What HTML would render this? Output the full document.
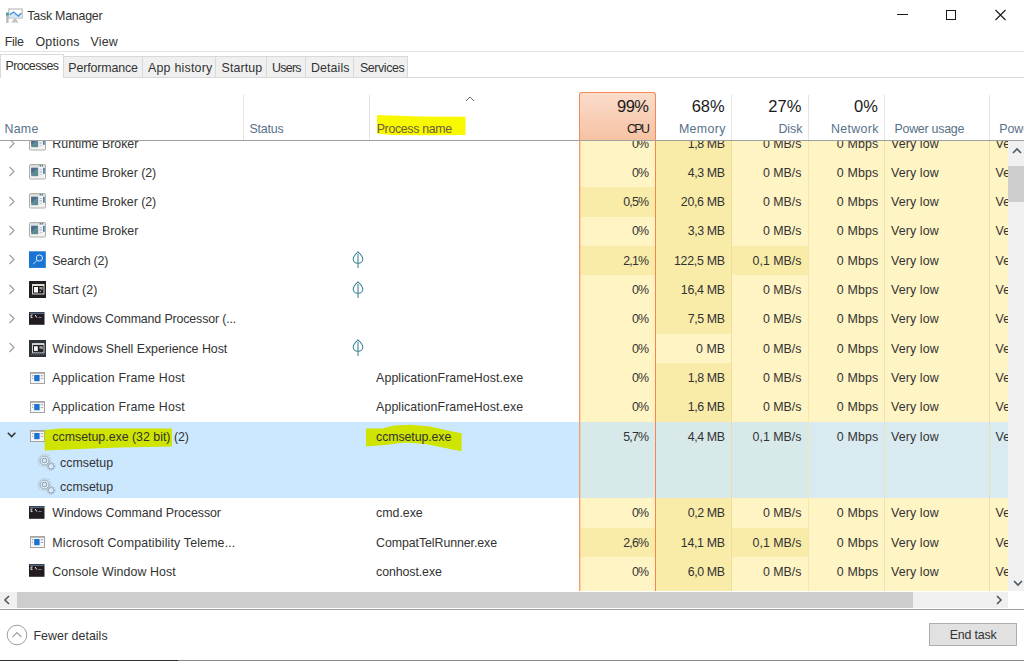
<!DOCTYPE html>
<html><head><meta charset="utf-8"><title>Task Manager</title>
<style>
html,body{margin:0;padding:0;background:#fff;width:1024px;height:661px;overflow:hidden;position:relative;}
.t{position:absolute;white-space:nowrap;line-height:20px;font-family:"Liberation Sans",sans-serif;}
.r{position:absolute;}
.clip{position:absolute;overflow:hidden;}
</style></head><body>
<div class="t" style="left:27.3px;top:6.10px;font-size:12.4px;color:#333;letter-spacing:-0.230px;">Task Manager</div>
<div class="r" style="left:897px;top:14px;width:11px;height:1px;background:#1a1a1a;"></div>
<div class="r" style="left:946px;top:10px;width:10px;height:10px;background:transparent;border:1px solid #1a1a1a;box-sizing:border-box;"></div>
<svg class="r" style="left:994px;top:9px" width="13" height="12" viewBox="0 0 13 12"><path d="M1.5 1 L11.5 11 M11.5 1 L1.5 11" stroke="#1a1a1a" stroke-width="1.1" fill="none"/></svg>
<svg class="r" style="left:0;top:0" width="30" height="30" viewBox="0 0 30 30">
<rect x="8.8" y="9" width="13.4" height="9" fill="#ffffff" stroke="#bdbdbd" stroke-width="1.2"/>
<path d="M9.6 14.6 L13.6 12 L18.4 16 L21.4 13 L21.4 17.8 L9.6 17.8Z" fill="#cfe6f7"/>
<path d="M9.6 14.6 L13.6 12 L18.4 16 L21.4 13" stroke="#4b92d4" stroke-width="1.3" fill="none"/>
<path d="M14.2 18.5 L15.8 18.5 L18.6 22.4 L11.2 22.4Z" fill="#c4c4c4"/>
<rect x="6.2" y="12.7" width="2.4" height="10.2" fill="#b9b9b9"/>
<rect x="6.2" y="12.7" width="2.4" height="2.8" fill="#4a9a86"/>
</svg>
<div class="t" style="left:4.8px;top:31.60px;font-size:12.4px;color:#333;letter-spacing:-0.290px;">File</div>
<div class="t" style="left:35.5px;top:31.60px;font-size:12.4px;color:#333;letter-spacing:0.216px;">Options</div>
<div class="t" style="left:90.4px;top:31.60px;font-size:12.4px;color:#333;letter-spacing:0.253px;">View</div>
<div class="r" style="left:0px;top:51px;width:1024px;height:1px;background:#e3e3e3;"></div>
<div class="r" style="left:0px;top:77px;width:1024px;height:1px;background:#dadada;"></div>
<div class="r" style="left:0px;top:54px;width:64px;height:24px;background:#ffffff;border:1px solid #d9d9d9;border-bottom:none;box-sizing:border-box;"></div>
<div class="t" style="left:5.5px;top:56.20px;font-size:12.4px;color:#333;letter-spacing:-0.545px;">Processes</div>
<div class="r" style="left:64px;top:56px;width:78.5px;height:22px;background:#f0f0f0;border:1px solid #d9d9d9;border-left:none;box-sizing:border-box;"></div>
<div class="t" style="left:68.3px;top:58.00px;font-size:12.4px;color:#333;letter-spacing:-0.124px;">Performance</div>
<div class="r" style="left:142.5px;top:56px;width:73.5px;height:22px;background:#f0f0f0;border:1px solid #d9d9d9;border-left:none;box-sizing:border-box;"></div>
<div class="t" style="left:148px;top:58.00px;font-size:12.4px;color:#333;letter-spacing:0.222px;">App history</div>
<div class="r" style="left:216px;top:56px;width:50.5px;height:22px;background:#f0f0f0;border:1px solid #d9d9d9;border-left:none;box-sizing:border-box;"></div>
<div class="t" style="left:221.5px;top:58.00px;font-size:12.4px;color:#333;letter-spacing:0.124px;">Startup</div>
<div class="r" style="left:266.5px;top:56px;width:39.5px;height:22px;background:#f0f0f0;border:1px solid #d9d9d9;border-left:none;box-sizing:border-box;"></div>
<div class="t" style="left:272px;top:58.00px;font-size:12.4px;color:#333;letter-spacing:-0.715px;">Users</div>
<div class="r" style="left:306px;top:56px;width:48px;height:22px;background:#f0f0f0;border:1px solid #d9d9d9;border-left:none;box-sizing:border-box;"></div>
<div class="t" style="left:310.9px;top:58.00px;font-size:12.4px;color:#333;letter-spacing:0.121px;">Details</div>
<div class="r" style="left:354px;top:56px;width:54px;height:22px;background:#f0f0f0;border:1px solid #d9d9d9;border-left:none;box-sizing:border-box;"></div>
<div class="t" style="left:360px;top:58.00px;font-size:12.4px;color:#333;letter-spacing:-0.402px;">Services</div>
<div class="r" style="left:243px;top:95px;width:1px;height:45px;background:#e3e3e3;"></div>
<div class="r" style="left:369px;top:95px;width:1px;height:45px;background:#e3e3e3;"></div>
<div class="r" style="left:731px;top:95px;width:1px;height:45px;background:#e3e3e3;"></div>
<div class="r" style="left:808px;top:95px;width:1px;height:45px;background:#e3e3e3;"></div>
<div class="r" style="left:884px;top:95px;width:1px;height:45px;background:#e3e3e3;"></div>
<div class="r" style="left:989px;top:95px;width:1px;height:45px;background:#e3e3e3;"></div>
<div class="r" style="left:0px;top:140px;width:1024px;height:1px;background:#a0a0a0;"></div>
<div class="t" style="left:4.6px;top:118.90px;font-size:12.4px;color:#587288;letter-spacing:0.213px;">Name</div>
<div class="t" style="left:249.4px;top:118.90px;font-size:12.4px;color:#587288;letter-spacing:-0.188px;">Status</div>
<svg class="r" style="left:0;top:0" width="1024" height="661"><polygon points="377,115 392,115.5 420,116.5 465.5,116.7 465.5,134.9 420,135.2 392,135 377,133.5" fill="#f8f800"/></svg>
<div class="t" style="left:376.7px;top:118.90px;font-size:12.4px;color:#6a5f40;letter-spacing:-0.337px;">Process name</div>
<svg class="r" style="left:465px;top:95px" width="10" height="7" viewBox="0 0 10 7"><path d="M1 6 L5 2 L9 6" stroke="#6d6d6d" stroke-width="1" fill="none"/></svg>
<div class="r" style="left:579px;top:92px;width:77px;height:48px;background:linear-gradient(#fadccb,#f7c2a3);border:1px solid #f4885a;border-bottom:none;border-radius:3px 3px 0 0;box-sizing:border-box;"></div>
<div class="t" style="right:375.5px;top:96.28px;font-size:16.5px;color:#1a1a1a;letter-spacing:-0.516px;">99%</div>
<div class="t" style="right:375.70000000000005px;top:118.90px;font-size:12.4px;color:#1a1a1a;letter-spacing:-1.586px;">CPU</div>
<div class="t" style="right:299.29999999999995px;top:96.28px;font-size:16.5px;color:#1a1a1a;">68%</div>
<div class="t" style="right:298.29999999999995px;top:118.90px;font-size:12.4px;color:#587288;letter-spacing:0.330px;">Memory</div>
<div class="t" style="right:222.70000000000005px;top:96.28px;font-size:16.5px;color:#1a1a1a;">27%</div>
<div class="t" style="right:221.70000000000005px;top:118.90px;font-size:12.4px;color:#587288;letter-spacing:-0.065px;">Disk</div>
<div class="t" style="right:146.20000000000005px;top:96.28px;font-size:16.5px;color:#1a1a1a;">0%</div>
<div class="t" style="right:145.20000000000005px;top:118.90px;font-size:12.4px;color:#587288;letter-spacing:0.324px;">Network</div>
<div class="t" style="left:894.5px;top:118.90px;font-size:12.4px;color:#587288;letter-spacing:-0.243px;">Power usage</div>
<div class="t" style="left:999.2px;top:118.90px;font-size:12.4px;color:#587288;">Power usage trend</div>
<div class="clip" style="left:0;top:141px;width:1008px;height:450px;"><div style="position:absolute;left:0;top:-141px;width:1024px;height:661px;">
<div class="r" style="left:580px;top:129px;width:75px;height:29px;background:#fff4c4;"></div>
<div class="r" style="left:656px;top:129px;width:75px;height:29px;background:#f9eca8;"></div>
<div class="r" style="left:731px;top:129px;width:77px;height:29px;background:#fff4c4;"></div>
<div class="r" style="left:808px;top:129px;width:76px;height:29px;background:#fff4c4;"></div>
<div class="r" style="left:884px;top:129px;width:105px;height:29px;background:#fff4c4;"></div>
<div class="r" style="left:989px;top:129px;width:19px;height:29px;background:#fff4c4;"></div>
<div class="r" style="left:580px;top:158px;width:75px;height:29px;background:#fff4c4;"></div>
<div class="r" style="left:656px;top:158px;width:75px;height:29px;background:#f9eca8;"></div>
<div class="r" style="left:731px;top:158px;width:77px;height:29px;background:#fff4c4;"></div>
<div class="r" style="left:808px;top:158px;width:76px;height:29px;background:#fff4c4;"></div>
<div class="r" style="left:884px;top:158px;width:105px;height:29px;background:#fff4c4;"></div>
<div class="r" style="left:989px;top:158px;width:19px;height:29px;background:#fff4c4;"></div>
<div class="r" style="left:580px;top:187px;width:75px;height:30px;background:#f9eca8;"></div>
<div class="r" style="left:656px;top:187px;width:75px;height:30px;background:#f9eca8;"></div>
<div class="r" style="left:731px;top:187px;width:77px;height:30px;background:#fff4c4;"></div>
<div class="r" style="left:808px;top:187px;width:76px;height:30px;background:#fff4c4;"></div>
<div class="r" style="left:884px;top:187px;width:105px;height:30px;background:#fff4c4;"></div>
<div class="r" style="left:989px;top:187px;width:19px;height:30px;background:#fff4c4;"></div>
<div class="r" style="left:580px;top:217px;width:75px;height:29px;background:#fff4c4;"></div>
<div class="r" style="left:656px;top:217px;width:75px;height:29px;background:#f9eca8;"></div>
<div class="r" style="left:731px;top:217px;width:77px;height:29px;background:#fff4c4;"></div>
<div class="r" style="left:808px;top:217px;width:76px;height:29px;background:#fff4c4;"></div>
<div class="r" style="left:884px;top:217px;width:105px;height:29px;background:#fff4c4;"></div>
<div class="r" style="left:989px;top:217px;width:19px;height:29px;background:#fff4c4;"></div>
<div class="r" style="left:580px;top:246px;width:75px;height:29px;background:#f9eca8;"></div>
<div class="r" style="left:656px;top:246px;width:75px;height:29px;background:#f9eca8;"></div>
<div class="r" style="left:731px;top:246px;width:77px;height:29px;background:#f9eca8;"></div>
<div class="r" style="left:808px;top:246px;width:76px;height:29px;background:#fff4c4;"></div>
<div class="r" style="left:884px;top:246px;width:105px;height:29px;background:#fff4c4;"></div>
<div class="r" style="left:989px;top:246px;width:19px;height:29px;background:#fff4c4;"></div>
<div class="r" style="left:580px;top:275px;width:75px;height:30px;background:#fff4c4;"></div>
<div class="r" style="left:656px;top:275px;width:75px;height:30px;background:#f9eca8;"></div>
<div class="r" style="left:731px;top:275px;width:77px;height:30px;background:#fff4c4;"></div>
<div class="r" style="left:808px;top:275px;width:76px;height:30px;background:#fff4c4;"></div>
<div class="r" style="left:884px;top:275px;width:105px;height:30px;background:#fff4c4;"></div>
<div class="r" style="left:989px;top:275px;width:19px;height:30px;background:#fff4c4;"></div>
<div class="r" style="left:580px;top:305px;width:75px;height:29px;background:#fff4c4;"></div>
<div class="r" style="left:656px;top:305px;width:75px;height:29px;background:#f9eca8;"></div>
<div class="r" style="left:731px;top:305px;width:77px;height:29px;background:#fff4c4;"></div>
<div class="r" style="left:808px;top:305px;width:76px;height:29px;background:#fff4c4;"></div>
<div class="r" style="left:884px;top:305px;width:105px;height:29px;background:#fff4c4;"></div>
<div class="r" style="left:989px;top:305px;width:19px;height:29px;background:#fff4c4;"></div>
<div class="r" style="left:580px;top:334px;width:75px;height:29px;background:#fff4c4;"></div>
<div class="r" style="left:656px;top:334px;width:75px;height:29px;background:#fff4c4;"></div>
<div class="r" style="left:731px;top:334px;width:77px;height:29px;background:#fff4c4;"></div>
<div class="r" style="left:808px;top:334px;width:76px;height:29px;background:#fff4c4;"></div>
<div class="r" style="left:884px;top:334px;width:105px;height:29px;background:#fff4c4;"></div>
<div class="r" style="left:989px;top:334px;width:19px;height:29px;background:#fff4c4;"></div>
<div class="r" style="left:580px;top:363px;width:75px;height:30px;background:#fff4c4;"></div>
<div class="r" style="left:656px;top:363px;width:75px;height:30px;background:#f9eca8;"></div>
<div class="r" style="left:731px;top:363px;width:77px;height:30px;background:#fff4c4;"></div>
<div class="r" style="left:808px;top:363px;width:76px;height:30px;background:#fff4c4;"></div>
<div class="r" style="left:884px;top:363px;width:105px;height:30px;background:#fff4c4;"></div>
<div class="r" style="left:989px;top:363px;width:19px;height:30px;background:#fff4c4;"></div>
<div class="r" style="left:580px;top:393px;width:75px;height:29px;background:#fff4c4;"></div>
<div class="r" style="left:656px;top:393px;width:75px;height:29px;background:#f9eca8;"></div>
<div class="r" style="left:731px;top:393px;width:77px;height:29px;background:#fff4c4;"></div>
<div class="r" style="left:808px;top:393px;width:76px;height:29px;background:#fff4c4;"></div>
<div class="r" style="left:884px;top:393px;width:105px;height:29px;background:#fff4c4;"></div>
<div class="r" style="left:989px;top:393px;width:19px;height:29px;background:#fff4c4;"></div>
<div class="r" style="left:580px;top:498px;width:75px;height:30px;background:#fff4c4;"></div>
<div class="r" style="left:656px;top:498px;width:75px;height:30px;background:#f9eca8;"></div>
<div class="r" style="left:731px;top:498px;width:77px;height:30px;background:#fff4c4;"></div>
<div class="r" style="left:808px;top:498px;width:76px;height:30px;background:#fff4c4;"></div>
<div class="r" style="left:884px;top:498px;width:105px;height:30px;background:#fff4c4;"></div>
<div class="r" style="left:989px;top:498px;width:19px;height:30px;background:#fff4c4;"></div>
<div class="r" style="left:580px;top:528px;width:75px;height:29px;background:#f9eca8;"></div>
<div class="r" style="left:656px;top:528px;width:75px;height:29px;background:#f9eca8;"></div>
<div class="r" style="left:731px;top:528px;width:77px;height:29px;background:#f9eca8;"></div>
<div class="r" style="left:808px;top:528px;width:76px;height:29px;background:#fff4c4;"></div>
<div class="r" style="left:884px;top:528px;width:105px;height:29px;background:#fff4c4;"></div>
<div class="r" style="left:989px;top:528px;width:19px;height:29px;background:#fff4c4;"></div>
<div class="r" style="left:580px;top:557px;width:75px;height:34px;background:#fff4c4;"></div>
<div class="r" style="left:656px;top:557px;width:75px;height:34px;background:#f9eca8;"></div>
<div class="r" style="left:731px;top:557px;width:77px;height:34px;background:#fff4c4;"></div>
<div class="r" style="left:808px;top:557px;width:76px;height:34px;background:#fff4c4;"></div>
<div class="r" style="left:884px;top:557px;width:105px;height:34px;background:#fff4c4;"></div>
<div class="r" style="left:989px;top:557px;width:19px;height:34px;background:#fff4c4;"></div>
<div class="r" style="left:0px;top:422px;width:579px;height:76px;background:#cce8ff;"></div>
<div class="r" style="left:580px;top:422px;width:75px;height:76px;background:#f9eca8;"></div>
<div class="r" style="left:656px;top:422px;width:75px;height:76px;background:#f9eca8;"></div>
<div class="r" style="left:731px;top:422px;width:77px;height:76px;background:#f9eca8;"></div>
<div class="r" style="left:808px;top:422px;width:76px;height:76px;background:#fff4c4;"></div>
<div class="r" style="left:884px;top:422px;width:105px;height:76px;background:#fff4c4;"></div>
<div class="r" style="left:989px;top:422px;width:19px;height:76px;background:#fff4c4;"></div>
<div class="r" style="left:580px;top:422px;width:428px;height:76px;background:rgba(204,232,255,0.75);"></div>
<div class="r" style="left:731px;top:141px;width:1px;height:450px;background:#eedfa0;"></div>
<div class="r" style="left:808px;top:141px;width:1px;height:450px;background:#f3e6b0;"></div>
<div class="r" style="left:884px;top:141px;width:1px;height:450px;background:#e9e3b8;"></div>
<div class="r" style="left:989px;top:141px;width:1px;height:450px;background:#efdcae;"></div>
<div class="r" style="left:579px;top:141px;width:1px;height:450px;background:#f29f6c;"></div>
<div class="r" style="left:580px;top:141px;width:1px;height:450px;background:rgba(246,170,130,0.45);"></div>
<div class="r" style="left:655px;top:141px;width:1px;height:450px;background:#fa8446;"></div>
<svg class="r" style="left:8px;top:137.50px" width="8" height="11" viewBox="0 0 8 11"><path d="M1.5 1 L6 5.5 L1.5 10" stroke="#9c9c9c" stroke-width="1.1" fill="none"/></svg>
<svg class="r" style="left:29px;top:135px" width="18" height="16" viewBox="0 0 18 16"><rect x="0.5" y="0.5" width="16" height="14.5" rx="1" fill="#f3f3f3" stroke="#b3aea4"/><rect x="1" y="1" width="15" height="1.6" fill="#d8d8d8"/><rect x="10.6" y="1.1" width="1.4" height="1.4" fill="#3b8494"/><rect x="12.6" y="1.1" width="1.4" height="1.4" fill="#3b8494"/><rect x="2.2" y="3.8" width="7" height="8.4" fill="#5d8b93"/><path d="M2.2 3.8 H9.2 L2.2 10Z" fill="#4d6c8e"/><rect x="14" y="3.8" width="1.8" height="6" fill="#4a86b8"/><rect x="10.5" y="5" width="2.6" height="0.9" fill="#c0c0c0"/><rect x="10.5" y="7.5" width="2.6" height="0.9" fill="#a0a0a0"/><rect x="10.5" y="10" width="2.6" height="0.9" fill="#c8c8c8"/></svg>
<div class="t" style="left:52.3px;top:133.70px;font-size:12.4px;color:#333;">Runtime Broker</div>
<div class="t" style="right:376.0px;top:133.70px;font-size:12.4px;color:#333;letter-spacing:-1.000px;">0%</div>
<div class="t" style="right:299.4px;top:133.70px;font-size:12.4px;color:#333;letter-spacing:-0.400px;">1,8 MB</div>
<div class="t" style="right:222.5px;top:133.70px;font-size:12.4px;color:#333;">0 MB/s</div>
<div class="t" style="right:145.5px;top:133.70px;font-size:12.4px;color:#333;letter-spacing:0.200px;">0 Mbps</div>
<div class="t" style="left:891px;top:133.70px;font-size:12.4px;color:#333;letter-spacing:0.125px;">Very low</div>
<div class="t" style="left:995.6px;top:133.70px;font-size:12.4px;color:#333;letter-spacing:0.125px;">Very low</div>
<svg class="r" style="left:8px;top:166.33px" width="8" height="11" viewBox="0 0 8 11"><path d="M1.5 1 L6 5.5 L1.5 10" stroke="#9c9c9c" stroke-width="1.1" fill="none"/></svg>
<svg class="r" style="left:29px;top:164px" width="18" height="16" viewBox="0 0 18 16"><rect x="0.5" y="0.5" width="16" height="14.5" rx="1" fill="#f3f3f3" stroke="#b3aea4"/><rect x="1" y="1" width="15" height="1.6" fill="#d8d8d8"/><rect x="10.6" y="1.1" width="1.4" height="1.4" fill="#3b8494"/><rect x="12.6" y="1.1" width="1.4" height="1.4" fill="#3b8494"/><rect x="2.2" y="3.8" width="7" height="8.4" fill="#5d8b93"/><path d="M2.2 3.8 H9.2 L2.2 10Z" fill="#4d6c8e"/><rect x="14" y="3.8" width="1.8" height="6" fill="#4a86b8"/><rect x="10.5" y="5" width="2.6" height="0.9" fill="#c0c0c0"/><rect x="10.5" y="7.5" width="2.6" height="0.9" fill="#a0a0a0"/><rect x="10.5" y="10" width="2.6" height="0.9" fill="#c8c8c8"/></svg>
<div class="t" style="left:52.3px;top:162.53px;font-size:12.4px;color:#333;letter-spacing:-0.045px;">Runtime Broker (2)</div>
<div class="t" style="right:376.0px;top:162.53px;font-size:12.4px;color:#333;letter-spacing:-1.000px;">0%</div>
<div class="t" style="right:299.4px;top:162.53px;font-size:12.4px;color:#333;letter-spacing:-0.400px;">4,3 MB</div>
<div class="t" style="right:222.5px;top:162.53px;font-size:12.4px;color:#333;">0 MB/s</div>
<div class="t" style="right:145.5px;top:162.53px;font-size:12.4px;color:#333;letter-spacing:0.200px;">0 Mbps</div>
<div class="t" style="left:891px;top:162.53px;font-size:12.4px;color:#333;letter-spacing:0.125px;">Very low</div>
<div class="t" style="left:995.6px;top:162.53px;font-size:12.4px;color:#333;letter-spacing:0.125px;">Very low</div>
<svg class="r" style="left:8px;top:195.66px" width="8" height="11" viewBox="0 0 8 11"><path d="M1.5 1 L6 5.5 L1.5 10" stroke="#9c9c9c" stroke-width="1.1" fill="none"/></svg>
<svg class="r" style="left:29px;top:193px" width="18" height="16" viewBox="0 0 18 16"><rect x="0.5" y="0.5" width="16" height="14.5" rx="1" fill="#f3f3f3" stroke="#b3aea4"/><rect x="1" y="1" width="15" height="1.6" fill="#d8d8d8"/><rect x="10.6" y="1.1" width="1.4" height="1.4" fill="#3b8494"/><rect x="12.6" y="1.1" width="1.4" height="1.4" fill="#3b8494"/><rect x="2.2" y="3.8" width="7" height="8.4" fill="#5d8b93"/><path d="M2.2 3.8 H9.2 L2.2 10Z" fill="#4d6c8e"/><rect x="14" y="3.8" width="1.8" height="6" fill="#4a86b8"/><rect x="10.5" y="5" width="2.6" height="0.9" fill="#c0c0c0"/><rect x="10.5" y="7.5" width="2.6" height="0.9" fill="#a0a0a0"/><rect x="10.5" y="10" width="2.6" height="0.9" fill="#c8c8c8"/></svg>
<div class="t" style="left:52.3px;top:191.86px;font-size:12.4px;color:#333;letter-spacing:-0.045px;">Runtime Broker (2)</div>
<div class="t" style="right:375.83333333333337px;top:191.86px;font-size:12.4px;color:#333;letter-spacing:-0.833px;">0,5%</div>
<div class="t" style="right:299.33333333333337px;top:191.86px;font-size:12.4px;color:#333;letter-spacing:-0.333px;">20,6 MB</div>
<div class="t" style="right:222.5px;top:191.86px;font-size:12.4px;color:#333;">0 MB/s</div>
<div class="t" style="right:145.5px;top:191.86px;font-size:12.4px;color:#333;letter-spacing:0.200px;">0 Mbps</div>
<div class="t" style="left:891px;top:191.86px;font-size:12.4px;color:#333;letter-spacing:0.125px;">Very low</div>
<div class="t" style="left:995.6px;top:191.86px;font-size:12.4px;color:#333;letter-spacing:0.125px;">Very low</div>
<svg class="r" style="left:8px;top:224.99px" width="8" height="11" viewBox="0 0 8 11"><path d="M1.5 1 L6 5.5 L1.5 10" stroke="#9c9c9c" stroke-width="1.1" fill="none"/></svg>
<svg class="r" style="left:29px;top:222px" width="18" height="16" viewBox="0 0 18 16"><rect x="0.5" y="0.5" width="16" height="14.5" rx="1" fill="#f3f3f3" stroke="#b3aea4"/><rect x="1" y="1" width="15" height="1.6" fill="#d8d8d8"/><rect x="10.6" y="1.1" width="1.4" height="1.4" fill="#3b8494"/><rect x="12.6" y="1.1" width="1.4" height="1.4" fill="#3b8494"/><rect x="2.2" y="3.8" width="7" height="8.4" fill="#5d8b93"/><path d="M2.2 3.8 H9.2 L2.2 10Z" fill="#4d6c8e"/><rect x="14" y="3.8" width="1.8" height="6" fill="#4a86b8"/><rect x="10.5" y="5" width="2.6" height="0.9" fill="#c0c0c0"/><rect x="10.5" y="7.5" width="2.6" height="0.9" fill="#a0a0a0"/><rect x="10.5" y="10" width="2.6" height="0.9" fill="#c8c8c8"/></svg>
<div class="t" style="left:52.3px;top:221.19px;font-size:12.4px;color:#333;">Runtime Broker</div>
<div class="t" style="right:376.0px;top:221.19px;font-size:12.4px;color:#333;letter-spacing:-1.000px;">0%</div>
<div class="t" style="right:299.4px;top:221.19px;font-size:12.4px;color:#333;letter-spacing:-0.400px;">3,3 MB</div>
<div class="t" style="right:222.5px;top:221.19px;font-size:12.4px;color:#333;">0 MB/s</div>
<div class="t" style="right:145.5px;top:221.19px;font-size:12.4px;color:#333;letter-spacing:0.200px;">0 Mbps</div>
<div class="t" style="left:891px;top:221.19px;font-size:12.4px;color:#333;letter-spacing:0.125px;">Very low</div>
<div class="t" style="left:995.6px;top:221.19px;font-size:12.4px;color:#333;letter-spacing:0.125px;">Very low</div>
<svg class="r" style="left:8px;top:254.32px" width="8" height="11" viewBox="0 0 8 11"><path d="M1.5 1 L6 5.5 L1.5 10" stroke="#9c9c9c" stroke-width="1.1" fill="none"/></svg>
<svg class="r" style="left:29px;top:251px" width="17" height="17" viewBox="0 0 17 17"><rect x="0" y="0.3" width="16.8" height="16.6" fill="#1a74d2"/><circle cx="10.4" cy="7" r="3.1" stroke="#e4efff" stroke-width="0.95" fill="none"/><path d="M8.2 9.2 L4.2 13.2" stroke="#d8e8fa" stroke-width="0.95"/></svg>
<div class="t" style="left:52.3px;top:250.52px;font-size:12.4px;color:#333;letter-spacing:-0.207px;">Search (2)</div>
<svg class="r" style="left:351.5px;top:251.32px" width="12" height="18" viewBox="0 0 12 18"><path d="M6 0.8 C3 3.5 1 6 1.2 8.5 C1.5 11 4 12.2 6 12.2 C8 12.2 10.5 11 10.8 8.5 C11 6 9 3.5 6 0.8Z" fill="none" stroke="#3f8496" stroke-width="1.05"/><path d="M6 3 V17" stroke="#3f8496" stroke-width="1.1"/></svg>
<div class="t" style="right:375.83333333333337px;top:250.52px;font-size:12.4px;color:#333;letter-spacing:-0.833px;">2,1%</div>
<div class="t" style="right:299.28571428571433px;top:250.52px;font-size:12.4px;color:#333;letter-spacing:-0.286px;">122,5 MB</div>
<div class="t" style="right:222.5px;top:250.52px;font-size:12.4px;color:#333;">0,1 MB/s</div>
<div class="t" style="right:145.5px;top:250.52px;font-size:12.4px;color:#333;letter-spacing:0.200px;">0 Mbps</div>
<div class="t" style="left:891px;top:250.52px;font-size:12.4px;color:#333;letter-spacing:0.125px;">Very low</div>
<div class="t" style="left:995.6px;top:250.52px;font-size:12.4px;color:#333;letter-spacing:0.125px;">Very low</div>
<svg class="r" style="left:8px;top:283.65px" width="8" height="11" viewBox="0 0 8 11"><path d="M1.5 1 L6 5.5 L1.5 10" stroke="#9c9c9c" stroke-width="1.1" fill="none"/></svg>
<svg class="r" style="left:29px;top:281px" width="17" height="17" viewBox="0 0 17 17"><rect x="0" y="0" width="17" height="17" fill="#231e22"/><rect x="3.5" y="3.5" width="11.5" height="9.5" fill="#1a1a1e" stroke="#dcd8cc" stroke-width="1"/><rect x="3.5" y="3.2" width="11.5" height="1.8" fill="#e4e0d6"/><rect x="5" y="6" width="4" height="5.5" fill="#fbfbfb"/><rect x="10.6" y="6" width="1" height="2.2" fill="#e8e8e8"/><rect x="12.4" y="6" width="1" height="2.8" fill="#e8e8e8"/><rect x="10.6" y="9.8" width="1.2" height="1.2" fill="#dddddd"/></svg>
<div class="t" style="left:52.3px;top:279.85px;font-size:12.4px;color:#333;letter-spacing:0.029px;">Start (2)</div>
<svg class="r" style="left:351.5px;top:280.65px" width="12" height="18" viewBox="0 0 12 18"><path d="M6 0.8 C3 3.5 1 6 1.2 8.5 C1.5 11 4 12.2 6 12.2 C8 12.2 10.5 11 10.8 8.5 C11 6 9 3.5 6 0.8Z" fill="none" stroke="#3f8496" stroke-width="1.05"/><path d="M6 3 V17" stroke="#3f8496" stroke-width="1.1"/></svg>
<div class="t" style="right:376.0px;top:279.85px;font-size:12.4px;color:#333;letter-spacing:-1.000px;">0%</div>
<div class="t" style="right:299.33333333333337px;top:279.85px;font-size:12.4px;color:#333;letter-spacing:-0.333px;">16,4 MB</div>
<div class="t" style="right:222.5px;top:279.85px;font-size:12.4px;color:#333;">0 MB/s</div>
<div class="t" style="right:145.5px;top:279.85px;font-size:12.4px;color:#333;letter-spacing:0.200px;">0 Mbps</div>
<div class="t" style="left:891px;top:279.85px;font-size:12.4px;color:#333;letter-spacing:0.125px;">Very low</div>
<div class="t" style="left:995.6px;top:279.85px;font-size:12.4px;color:#333;letter-spacing:0.125px;">Very low</div>
<svg class="r" style="left:8px;top:312.98px" width="8" height="11" viewBox="0 0 8 11"><path d="M1.5 1 L6 5.5 L1.5 10" stroke="#9c9c9c" stroke-width="1.1" fill="none"/></svg>
<svg class="r" style="left:29px;top:312px" width="16" height="13" viewBox="0 0 16 13"><rect x="0" y="0" width="15.5" height="12.8" fill="#221c22"/><rect x="0.5" y="0.6" width="14.5" height="1.2" fill="#5f7e9c"/><path d="M3.6 3 H2 V5.6 H3.6" stroke="#e0e0e0" stroke-width="1" fill="none"/><path d="M6.2 3 L7.8 5.6" stroke="#e6e6e6" stroke-width="1"/><rect x="9.5" y="5" width="3" height="0.9" fill="#8a8a90"/></svg>
<div class="t" style="left:52.3px;top:309.18px;font-size:12.4px;color:#333;letter-spacing:-0.137px;">Windows Command Processor (...</div>
<div class="t" style="right:376.0px;top:309.18px;font-size:12.4px;color:#333;letter-spacing:-1.000px;">0%</div>
<div class="t" style="right:299.4px;top:309.18px;font-size:12.4px;color:#333;letter-spacing:-0.400px;">7,5 MB</div>
<div class="t" style="right:222.5px;top:309.18px;font-size:12.4px;color:#333;">0 MB/s</div>
<div class="t" style="right:145.5px;top:309.18px;font-size:12.4px;color:#333;letter-spacing:0.200px;">0 Mbps</div>
<div class="t" style="left:891px;top:309.18px;font-size:12.4px;color:#333;letter-spacing:0.125px;">Very low</div>
<div class="t" style="left:995.6px;top:309.18px;font-size:12.4px;color:#333;letter-spacing:0.125px;">Very low</div>
<svg class="r" style="left:8px;top:342.31px" width="8" height="11" viewBox="0 0 8 11"><path d="M1.5 1 L6 5.5 L1.5 10" stroke="#9c9c9c" stroke-width="1.1" fill="none"/></svg>
<svg class="r" style="left:29px;top:340px" width="17" height="17" viewBox="0 0 17 17"><rect x="0" y="0" width="17" height="17" fill="#2e3438"/><rect x="3.5" y="3.8" width="11.5" height="9" fill="#1e2226" stroke="#d4d4d4" stroke-width="1"/><rect x="3.5" y="3.3" width="11.5" height="1.6" fill="#dedede"/><rect x="5" y="6.3" width="3.8" height="4.6" fill="#fbfbfb"/><rect x="10.6" y="6.2" width="1.1" height="2.4" fill="#e0e0e0"/><rect x="12.4" y="6.2" width="1.1" height="3" fill="#e0e0e0"/><path d="M4 12.3 H14.5" stroke="#4a78a8" stroke-width="1" stroke-dasharray="1 1"/><path d="M2 14.6 H15" stroke="#6a625e" stroke-width="0.9" stroke-dasharray="1 1"/></svg>
<div class="t" style="left:52.3px;top:338.51px;font-size:12.4px;color:#333;letter-spacing:-0.022px;">Windows Shell Experience Host</div>
<svg class="r" style="left:351.5px;top:339.31px" width="12" height="18" viewBox="0 0 12 18"><path d="M6 0.8 C3 3.5 1 6 1.2 8.5 C1.5 11 4 12.2 6 12.2 C8 12.2 10.5 11 10.8 8.5 C11 6 9 3.5 6 0.8Z" fill="none" stroke="#3f8496" stroke-width="1.05"/><path d="M6 3 V17" stroke="#3f8496" stroke-width="1.1"/></svg>
<div class="t" style="right:376.0px;top:338.51px;font-size:12.4px;color:#333;letter-spacing:-1.000px;">0%</div>
<div class="t" style="right:299px;top:338.51px;font-size:12.4px;color:#333;">0 MB</div>
<div class="t" style="right:222.5px;top:338.51px;font-size:12.4px;color:#333;">0 MB/s</div>
<div class="t" style="right:145.5px;top:338.51px;font-size:12.4px;color:#333;letter-spacing:0.200px;">0 Mbps</div>
<div class="t" style="left:891px;top:338.51px;font-size:12.4px;color:#333;letter-spacing:0.125px;">Very low</div>
<div class="t" style="left:995.6px;top:338.51px;font-size:12.4px;color:#333;letter-spacing:0.125px;">Very low</div>
<svg class="r" style="left:30px;top:372px" width="16" height="13" viewBox="0 0 16 13"><rect x="0.5" y="0.5" width="14" height="11" fill="#f7f7f7" stroke="#a4a4a4"/><rect x="1" y="1" width="13" height="1" fill="#b8b8b8"/><rect x="4.2" y="3" width="5.4" height="6.2" fill="#1a73d2"/><rect x="2" y="3.3" width="1.2" height="1" fill="#888"/><rect x="2" y="6" width="1.2" height="1" fill="#aaa"/><rect x="10.6" y="3.3" width="2.6" height="0.9" fill="#999"/><rect x="10.6" y="6" width="2.6" height="0.9" fill="#aaa"/></svg>
<div class="t" style="left:52.3px;top:367.84px;font-size:12.4px;color:#333;letter-spacing:0.177px;">Application Frame Host</div>
<div class="t" style="left:376.1px;top:367.84px;font-size:12.4px;color:#333;letter-spacing:0.073px;">ApplicationFrameHost.exe</div>
<div class="t" style="right:376.0px;top:367.84px;font-size:12.4px;color:#333;letter-spacing:-1.000px;">0%</div>
<div class="t" style="right:299.4px;top:367.84px;font-size:12.4px;color:#333;letter-spacing:-0.400px;">1,8 MB</div>
<div class="t" style="right:222.5px;top:367.84px;font-size:12.4px;color:#333;">0 MB/s</div>
<div class="t" style="right:145.5px;top:367.84px;font-size:12.4px;color:#333;letter-spacing:0.200px;">0 Mbps</div>
<div class="t" style="left:891px;top:367.84px;font-size:12.4px;color:#333;letter-spacing:0.125px;">Very low</div>
<div class="t" style="left:995.6px;top:367.84px;font-size:12.4px;color:#333;letter-spacing:0.125px;">Very low</div>
<svg class="r" style="left:30px;top:401px" width="16" height="13" viewBox="0 0 16 13"><rect x="0.5" y="0.5" width="14" height="11" fill="#f7f7f7" stroke="#a4a4a4"/><rect x="1" y="1" width="13" height="1" fill="#b8b8b8"/><rect x="4.2" y="3" width="5.4" height="6.2" fill="#1a73d2"/><rect x="2" y="3.3" width="1.2" height="1" fill="#888"/><rect x="2" y="6" width="1.2" height="1" fill="#aaa"/><rect x="10.6" y="3.3" width="2.6" height="0.9" fill="#999"/><rect x="10.6" y="6" width="2.6" height="0.9" fill="#aaa"/></svg>
<div class="t" style="left:52.3px;top:397.17px;font-size:12.4px;color:#333;letter-spacing:0.177px;">Application Frame Host</div>
<div class="t" style="left:376.1px;top:397.17px;font-size:12.4px;color:#333;letter-spacing:0.073px;">ApplicationFrameHost.exe</div>
<div class="t" style="right:376.0px;top:397.17px;font-size:12.4px;color:#333;letter-spacing:-1.000px;">0%</div>
<div class="t" style="right:299.4px;top:397.17px;font-size:12.4px;color:#333;letter-spacing:-0.400px;">1,6 MB</div>
<div class="t" style="right:222.5px;top:397.17px;font-size:12.4px;color:#333;">0 MB/s</div>
<div class="t" style="right:145.5px;top:397.17px;font-size:12.4px;color:#333;letter-spacing:0.200px;">0 Mbps</div>
<div class="t" style="left:891px;top:397.17px;font-size:12.4px;color:#333;letter-spacing:0.125px;">Very low</div>
<div class="t" style="left:995.6px;top:397.17px;font-size:12.4px;color:#333;letter-spacing:0.125px;">Very low</div>
<svg class="r" style="left:5.5px;top:431.30px" width="12" height="8" viewBox="0 0 12 8"><path d="M1.8 1.8 L5.6 5.6 L9.4 1.8" stroke="#333" stroke-width="1.5" fill="none"/></svg>
<svg class="r" style="left:30px;top:430px" width="16" height="13" viewBox="0 0 16 13"><rect x="0.5" y="0.5" width="14" height="11" fill="#f7f7f7" stroke="#a4a4a4"/><rect x="1" y="1" width="13" height="1" fill="#b8b8b8"/><rect x="4.2" y="3" width="5.4" height="6.2" fill="#1a73d2"/><rect x="2" y="3.3" width="1.2" height="1" fill="#888"/><rect x="2" y="6" width="1.2" height="1" fill="#aaa"/><rect x="10.6" y="3.3" width="2.6" height="0.9" fill="#999"/><rect x="10.6" y="6" width="2.6" height="0.9" fill="#aaa"/></svg>
<svg class="r" style="left:0;top:0" width="1024" height="661"><polygon points="44.7,430 60,428.6 120,428.6 172,428.6 172,446.6 120,447.5 80,449 44.7,450.5" fill="#cfe400"/></svg>
<div class="t" style="left:52.3px;top:426.50px;font-size:12.4px;color:#333;letter-spacing:-0.014px;">ccmsetup.exe (32 bit) (2)</div>
<svg class="r" style="left:0;top:0" width="1024" height="661"><polygon points="366,428.5 382,428.5 394,425.5 411,424.7 430,426.5 449,430.8 461.6,433.2 461.6,451.3 445,448 425,444 405,442.5 385,445 366,446.6" fill="#cfe400"/></svg>
<div class="t" style="left:376.1px;top:426.50px;font-size:12.4px;color:#333;letter-spacing:-0.114px;">ccmsetup.exe</div>
<div class="t" style="right:375.83333333333337px;top:426.50px;font-size:12.4px;color:#333;letter-spacing:-0.833px;">5,7%</div>
<div class="t" style="right:299.4px;top:426.50px;font-size:12.4px;color:#333;letter-spacing:-0.400px;">4,4 MB</div>
<div class="t" style="right:222.5px;top:426.50px;font-size:12.4px;color:#333;">0,1 MB/s</div>
<div class="t" style="right:145.5px;top:426.50px;font-size:12.4px;color:#333;letter-spacing:0.200px;">0 Mbps</div>
<div class="t" style="left:891px;top:426.50px;font-size:12.4px;color:#333;letter-spacing:0.125px;">Very low</div>
<div class="t" style="left:995.6px;top:426.50px;font-size:12.4px;color:#333;letter-spacing:0.125px;">Very low</div>
<svg class="r" style="left:29px;top:506px" width="16" height="13" viewBox="0 0 16 13"><rect x="0" y="0" width="15.5" height="12.8" fill="#221c22"/><rect x="0.5" y="0.6" width="14.5" height="1.2" fill="#5f7e9c"/><path d="M3.6 3 H2 V5.6 H3.6" stroke="#e0e0e0" stroke-width="1" fill="none"/><path d="M6.2 3 L7.8 5.6" stroke="#e6e6e6" stroke-width="1"/><rect x="9.5" y="5" width="3" height="0.9" fill="#8a8a90"/></svg>
<div class="t" style="left:52.3px;top:503.30px;font-size:12.4px;color:#333;letter-spacing:-0.058px;">Windows Command Processor</div>
<div class="t" style="left:376.1px;top:503.30px;font-size:12.4px;color:#333;letter-spacing:-0.038px;">cmd.exe</div>
<div class="t" style="right:376.0px;top:503.30px;font-size:12.4px;color:#333;letter-spacing:-1.000px;">0%</div>
<div class="t" style="right:299.4px;top:503.30px;font-size:12.4px;color:#333;letter-spacing:-0.400px;">0,2 MB</div>
<div class="t" style="right:222.5px;top:503.30px;font-size:12.4px;color:#333;">0 MB/s</div>
<div class="t" style="right:145.5px;top:503.30px;font-size:12.4px;color:#333;letter-spacing:0.200px;">0 Mbps</div>
<div class="t" style="left:891px;top:503.30px;font-size:12.4px;color:#333;letter-spacing:0.125px;">Very low</div>
<div class="t" style="left:995.6px;top:503.30px;font-size:12.4px;color:#333;letter-spacing:0.125px;">Very low</div>
<svg class="r" style="left:30px;top:536px" width="16" height="13" viewBox="0 0 16 13"><rect x="0.5" y="0.5" width="14" height="11" fill="#f7f7f7" stroke="#a4a4a4"/><rect x="1" y="1" width="13" height="1" fill="#b8b8b8"/><rect x="4.2" y="3" width="5.4" height="6.2" fill="#1a73d2"/><rect x="2" y="3.3" width="1.2" height="1" fill="#888"/><rect x="2" y="6" width="1.2" height="1" fill="#aaa"/><rect x="10.6" y="3.3" width="2.6" height="0.9" fill="#999"/><rect x="10.6" y="6" width="2.6" height="0.9" fill="#aaa"/></svg>
<div class="t" style="left:52.3px;top:532.60px;font-size:12.4px;color:#333;letter-spacing:0.152px;">Microsoft Compatibility Teleme...</div>
<div class="t" style="left:376.1px;top:532.60px;font-size:12.4px;color:#333;letter-spacing:-0.089px;">CompatTelRunner.exe</div>
<div class="t" style="right:375.83333333333337px;top:532.60px;font-size:12.4px;color:#333;letter-spacing:-0.833px;">2,6%</div>
<div class="t" style="right:299.33333333333337px;top:532.60px;font-size:12.4px;color:#333;letter-spacing:-0.333px;">14,1 MB</div>
<div class="t" style="right:222.5px;top:532.60px;font-size:12.4px;color:#333;">0,1 MB/s</div>
<div class="t" style="right:145.5px;top:532.60px;font-size:12.4px;color:#333;letter-spacing:0.200px;">0 Mbps</div>
<div class="t" style="left:891px;top:532.60px;font-size:12.4px;color:#333;letter-spacing:0.125px;">Very low</div>
<div class="t" style="left:995.6px;top:532.60px;font-size:12.4px;color:#333;letter-spacing:0.125px;">Very low</div>
<svg class="r" style="left:29px;top:564px" width="16" height="13" viewBox="0 0 16 13"><rect x="0" y="0" width="15.5" height="12.8" fill="#221c22"/><rect x="0.5" y="0.6" width="14.5" height="1.2" fill="#5f7e9c"/><path d="M3.6 3 H2 V5.6 H3.6" stroke="#e0e0e0" stroke-width="1" fill="none"/><path d="M6.2 3 L7.8 5.6" stroke="#e6e6e6" stroke-width="1"/><rect x="9.5" y="5" width="3" height="0.9" fill="#8a8a90"/></svg>
<div class="t" style="left:52.3px;top:561.70px;font-size:12.4px;color:#333;letter-spacing:0.089px;">Console Window Host</div>
<div class="t" style="left:376.1px;top:561.70px;font-size:12.4px;color:#333;letter-spacing:-0.103px;">conhost.exe</div>
<div class="t" style="right:376.0px;top:561.70px;font-size:12.4px;color:#333;letter-spacing:-1.000px;">0%</div>
<div class="t" style="right:299.4px;top:561.70px;font-size:12.4px;color:#333;letter-spacing:-0.400px;">6,0 MB</div>
<div class="t" style="right:222.5px;top:561.70px;font-size:12.4px;color:#333;">0 MB/s</div>
<div class="t" style="right:145.5px;top:561.70px;font-size:12.4px;color:#333;letter-spacing:0.200px;">0 Mbps</div>
<div class="t" style="left:891px;top:561.70px;font-size:12.4px;color:#333;letter-spacing:0.125px;">Very low</div>
<div class="t" style="left:995.6px;top:561.70px;font-size:12.4px;color:#333;letter-spacing:0.125px;">Very low</div>
<svg class="r" style="left:37px;top:453px" width="20" height="18" viewBox="0 0 20 18"><circle cx="7.5" cy="7.5" r="5.6" fill="none" stroke="#b8cad6" stroke-width="2.4" stroke-dasharray="1.5 1.1"/><circle cx="7.5" cy="7.5" r="4.2" fill="#f2f8fc" stroke="#8fa3b2" stroke-width="0.8"/><circle cx="7.5" cy="7.5" r="2.4" fill="#cce8ff" stroke="#7890a0" stroke-width="0.9"/><circle cx="14" cy="13.3" r="3.6" fill="none" stroke="#a9bccb" stroke-width="1.6" stroke-dasharray="1.2 0.9"/><circle cx="14" cy="13.3" r="2.7" fill="#e8f1f8" stroke="#7f95a6" stroke-width="0.8"/><circle cx="14" cy="13.3" r="1.2" fill="#cce8ff"/></svg>
<div class="t" style="left:60px;top:452.90px;font-size:12.4px;color:#333;">ccmsetup</div>
<svg class="r" style="left:37px;top:477px" width="20" height="18" viewBox="0 0 20 18"><circle cx="7.5" cy="7.5" r="5.6" fill="none" stroke="#b8cad6" stroke-width="2.4" stroke-dasharray="1.5 1.1"/><circle cx="7.5" cy="7.5" r="4.2" fill="#f2f8fc" stroke="#8fa3b2" stroke-width="0.8"/><circle cx="7.5" cy="7.5" r="2.4" fill="#cce8ff" stroke="#7890a0" stroke-width="0.9"/><circle cx="14" cy="13.3" r="3.6" fill="none" stroke="#a9bccb" stroke-width="1.6" stroke-dasharray="1.2 0.9"/><circle cx="14" cy="13.3" r="2.7" fill="#e8f1f8" stroke="#7f95a6" stroke-width="0.8"/><circle cx="14" cy="13.3" r="1.2" fill="#cce8ff"/></svg>
<div class="t" style="left:60px;top:476.60px;font-size:12.4px;color:#333;">ccmsetup</div>
</div></div>
<div class="r" style="left:1008px;top:141px;width:16px;height:450px;background:#f0f0f0;"></div>
<div class="r" style="left:1008px;top:166px;width:16px;height:36px;background:#cdcdcd;"></div>
<svg class="r" style="left:1012px;top:146.5px" width="10" height="8" viewBox="0 0 10 8"><path d="M1 6 L5 2 L9 6" stroke="#4c5864" stroke-width="1.6" fill="none"/></svg>
<svg class="r" style="left:1012.5px;top:578.5px" width="10" height="8" viewBox="0 0 10 8"><path d="M1 2 L5 6 L9 2" stroke="#4c5864" stroke-width="1.6" fill="none"/></svg>
<div class="r" style="left:0px;top:592px;width:1008px;height:16px;background:#f0f0f0;"></div>
<div class="r" style="left:17px;top:592px;width:896px;height:16px;background:#cdcdcd;"></div>
<svg class="r" style="left:3px;top:595px" width="8" height="10" viewBox="0 0 8 10"><path d="M6 1 L2 5 L6 9" stroke="#4c5864" stroke-width="1.6" fill="none"/></svg>
<svg class="r" style="left:995px;top:595px" width="8" height="10" viewBox="0 0 8 10"><path d="M2 1 L6 5 L2 9" stroke="#4c5864" stroke-width="1.6" fill="none"/></svg>
<div class="r" style="left:0px;top:609px;width:1024px;height:1px;background:#a0a0a0;"></div>
<svg class="r" style="left:6px;top:624px" width="22" height="22" viewBox="0 0 22 22"><circle cx="11" cy="11" r="9.8" fill="none" stroke="#a0a0a0" stroke-width="1"/><path d="M6.5 13 L11 8.5 L15.5 13" stroke="#a0a0a0" stroke-width="1.1" fill="none"/></svg>
<div class="t" style="left:33.5px;top:626.20px;font-size:12.4px;color:#333;letter-spacing:0.034px;">Fewer details</div>
<div class="r" style="left:929px;top:623px;width:88px;height:23px;background:#e1e1e1;border:1px solid #adadad;box-sizing:border-box;"></div>
<div class="t" style="left:949.8px;top:624.50px;font-size:12.4px;color:#333;letter-spacing:-0.203px;">End task</div>
<div class="r" style="left:0px;top:660px;width:178px;height:1px;background:#2a3033;"></div>
<div class="r" style="left:178px;top:660px;width:846px;height:1px;background:#878787;"></div>
</body></html>
